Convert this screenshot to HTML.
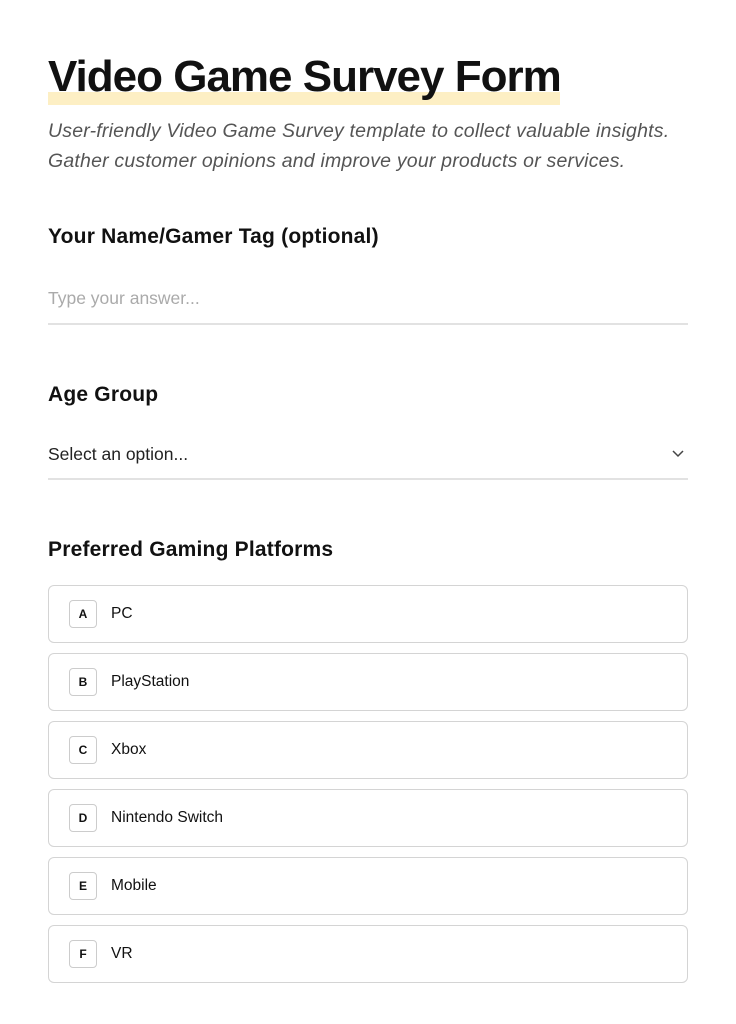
<!DOCTYPE html>
<html><head><style>
body{margin:0;background:#fff;font-family:"Liberation Sans",sans-serif;color:#111;}
.wrap{position:absolute;left:48px;width:640px;top:0}
h1{position:absolute;top:51px;left:0;margin:0;font-size:44px;font-weight:bold;letter-spacing:-1px;line-height:52px;white-space:nowrap}
.hl{position:absolute;left:0;top:92px;width:512px;height:13px;background:#fdefc4}
.sub{position:absolute;top:116px;left:0;font-size:19.5px;font-style:italic;color:#555;line-height:30px;letter-spacing:0.2px;white-space:nowrap}
.lab{position:absolute;left:0;font-size:21px;font-weight:bold;letter-spacing:0.2px}
.line{position:absolute;left:0;width:640px;height:2px;background:#e2e2e2}
.ph{position:absolute;left:0;font-size:17.5px;color:#aaa}
.opt{position:absolute;left:0;width:638px;height:56px;border:1px solid #d4d4d4;border-radius:6px}
.b{position:absolute;left:20px;top:14px;width:26px;height:26px;border:1px solid #ccc;border-radius:4px;font-size:12px;font-weight:bold;text-align:center;line-height:26px}
.t{position:absolute;left:62px;top:19px;font-size:15.5px}
</style></head><body>
<div class="wrap">
<div class="hl"></div>
<h1>Video Game Survey Form</h1>
<div class="sub">User-friendly Video Game Survey template to collect valuable insights.<br>Gather customer opinions and improve your products or services.</div>
<div class="lab" style="top:225px">Your Name/Gamer Tag (optional)</div>
<div class="ph" style="top:288px">Type your answer...</div>
<div class="line" style="top:323px"></div>
<div class="lab" style="top:383px">Age Group</div>
<div class="ph" style="top:444px;color:#222">Select an option...</div>
<svg style="position:absolute;left:623px;top:448px" width="14" height="10" viewBox="0 0 14 10"><path d="M2 3l5 5 5-5" fill="none" stroke="#444" stroke-width="1.5"/></svg>
<div class="line" style="top:478px"></div>
<div class="lab" style="top:538px">Preferred Gaming Platforms</div>
<div class="opt" style="top:585px"><div class="b">A</div><div class="t">PC</div></div>
<div class="opt" style="top:653px"><div class="b">B</div><div class="t">PlayStation</div></div>
<div class="opt" style="top:721px"><div class="b">C</div><div class="t">Xbox</div></div>
<div class="opt" style="top:789px"><div class="b">D</div><div class="t">Nintendo Switch</div></div>
<div class="opt" style="top:857px"><div class="b">E</div><div class="t">Mobile</div></div>
<div class="opt" style="top:925px"><div class="b">F</div><div class="t">VR</div></div>
</div>
</body></html>
